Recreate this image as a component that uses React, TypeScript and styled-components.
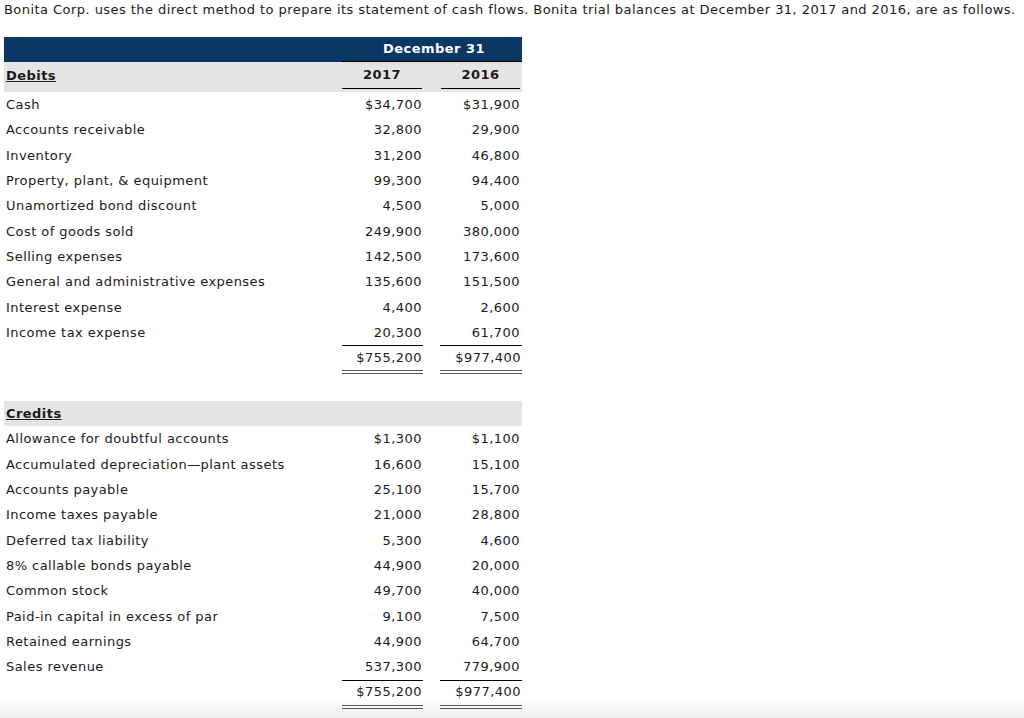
import React from "react";
import styled, { createGlobalStyle } from "styled-components";

const Global = createGlobalStyle`
  html {
    min-height: 718px;
    background: linear-gradient(to bottom, #ffffff 0px, #ffffff 698px, #ececec 718px);
  }
  body {
    margin: 0;
    font-family: "DejaVu Sans", Verdana, sans-serif;
    font-size: 13px;
    letter-spacing: 0.45px;
    color: #1a1a1a;
  }
`;

const Page = styled.div`
  padding: 0 4px;
`;

const Intro = styled.p`
  margin: 0;
  line-height: 20px;
  white-space: nowrap;
`;

const Table = styled.div`
  width: 518px;
  margin-top: 17px;
`;

const BlueRow = styled.div`
  display: flex;
  height: 25px;
  background: #0b3764;
`;

const Spacer = styled.div`
  width: 338px;
  flex-shrink: 0;
`;

const DecCell = styled.div`
  width: 180px;
  box-sizing: border-box;
  border-bottom: 1px solid #000;
  color: #fff;
  font-weight: bold;
  display: flex;
  align-items: center;
  justify-content: center;
  padding: 0 0 1px 4px;
`;

const GrayRow = styled.div<{ $h: number }>`
  display: flex;
  align-items: center;
  height: ${(p) => p.$h}px;
  background: #e4e4e4;
`;

const SectionLabel = styled.div<{ $pb: number }>`
  width: 336px;
  flex-shrink: 0;
  padding: 0 0 ${(p) => p.$pb}px 2px;
  font-weight: bold;
  text-decoration: underline;
`;

const YearCell = styled.div<{ $w: number; $ml: number }>`
  width: ${(p) => p.$w}px;
  margin-left: ${(p) => p.$ml}px;
  box-sizing: border-box;
  border-bottom: 1px solid #000;
  font-weight: bold;
  text-align: center;
  line-height: 20px;
  padding-bottom: 3px;
  align-self: flex-end;
  margin-bottom: 3px;
`;

const Row = styled.div`
  display: flex;
  align-items: center;
  height: 25.33px;
`;

const Label = styled.div`
  width: 336px;
  flex-shrink: 0;
  padding-left: 2px;
  white-space: nowrap;
`;

const Num = styled.div<{ $w: number; $ml: number }>`
  width: ${(p) => p.$w}px;
  margin-left: ${(p) => p.$ml}px;
  text-align: right;
`;

const TotalRow = styled.div<{ $mb: number }>`
  display: flex;
  height: 29px;
  margin-bottom: ${(p) => p.$mb}px;
`;

const TotalCell = styled.div<{ $w: number; $ml: number }>`
  width: ${(p) => p.$w}px;
  margin-left: ${(p) => p.$ml}px;
  box-sizing: border-box;
  border-top: 1px solid #000;
  border-bottom: 4px double #555;
  display: flex;
  align-items: center;
  justify-content: flex-end;
  padding: 0 1px 2px 0;
`;

type Item = [string, string, string];

const debits: Item[] = [
  ["Cash", "$34,700", "$31,900"],
  ["Accounts receivable", "32,800", "29,900"],
  ["Inventory", "31,200", "46,800"],
  ["Property, plant, & equipment", "99,300", "94,400"],
  ["Unamortized bond discount", "4,500", "5,000"],
  ["Cost of goods sold", "249,900", "380,000"],
  ["Selling expenses", "142,500", "173,600"],
  ["General and administrative expenses", "135,600", "151,500"],
  ["Interest expense", "4,400", "2,600"],
  ["Income tax expense", "20,300", "61,700"],
];

const credits: Item[] = [
  ["Allowance for doubtful accounts", "$1,300", "$1,100"],
  ["Accumulated depreciation\u2014plant assets", "16,600", "15,100"],
  ["Accounts payable", "25,100", "15,700"],
  ["Income taxes payable", "21,000", "28,800"],
  ["Deferred tax liability", "5,300", "4,600"],
  ["8% callable bonds payable", "44,900", "20,000"],
  ["Common stock", "49,700", "40,000"],
  ["Paid-in capital in excess of par", "9,100", "7,500"],
  ["Retained earnings", "44,900", "64,700"],
  ["Sales revenue", "537,300", "779,900"],
];

const Rows = ({ items }: { items: Item[] }) => (
  <>
    {items.map(([l, a, b]) => (
      <Row key={l}>
        <Label>{l}</Label>
        <Num $w={80} $ml={0}>{a}</Num>
        <Num $w={78} $ml={20}>{b}</Num>
      </Row>
    ))}
  </>
);

const Totals = ({ mb }: { mb: number }) => (
  <TotalRow $mb={mb}>
    <Spacer />
    <TotalCell $w={81} $ml={0}>$755,200</TotalCell>
    <TotalCell $w={82} $ml={17}>$977,400</TotalCell>
  </TotalRow>
);

export default function App() {
  return (
    <Page>
      <Global />
      <Intro>
        Bonita Corp. uses the direct method to prepare its statement of cash flows. Bonita trial balances at December 31, 2017 and 2016, are as follows.
      </Intro>
      <Table>
        <BlueRow>
          <Spacer />
          <DecCell>December 31</DecCell>
        </BlueRow>
        <GrayRow $h={30}>
          <SectionLabel $pb={4}>Debits</SectionLabel>
          <YearCell $w={80} $ml={0}>2017</YearCell>
          <YearCell $w={79} $ml={19}>2016</YearCell>
        </GrayRow>
        <Rows items={debits} />
        <Totals mb={27} />
        <GrayRow $h={25}>
          <SectionLabel $pb={0}>Credits</SectionLabel>
        </GrayRow>
        <Rows items={credits} />
        <Totals mb={0} />
      </Table>
    </Page>
  );
}
